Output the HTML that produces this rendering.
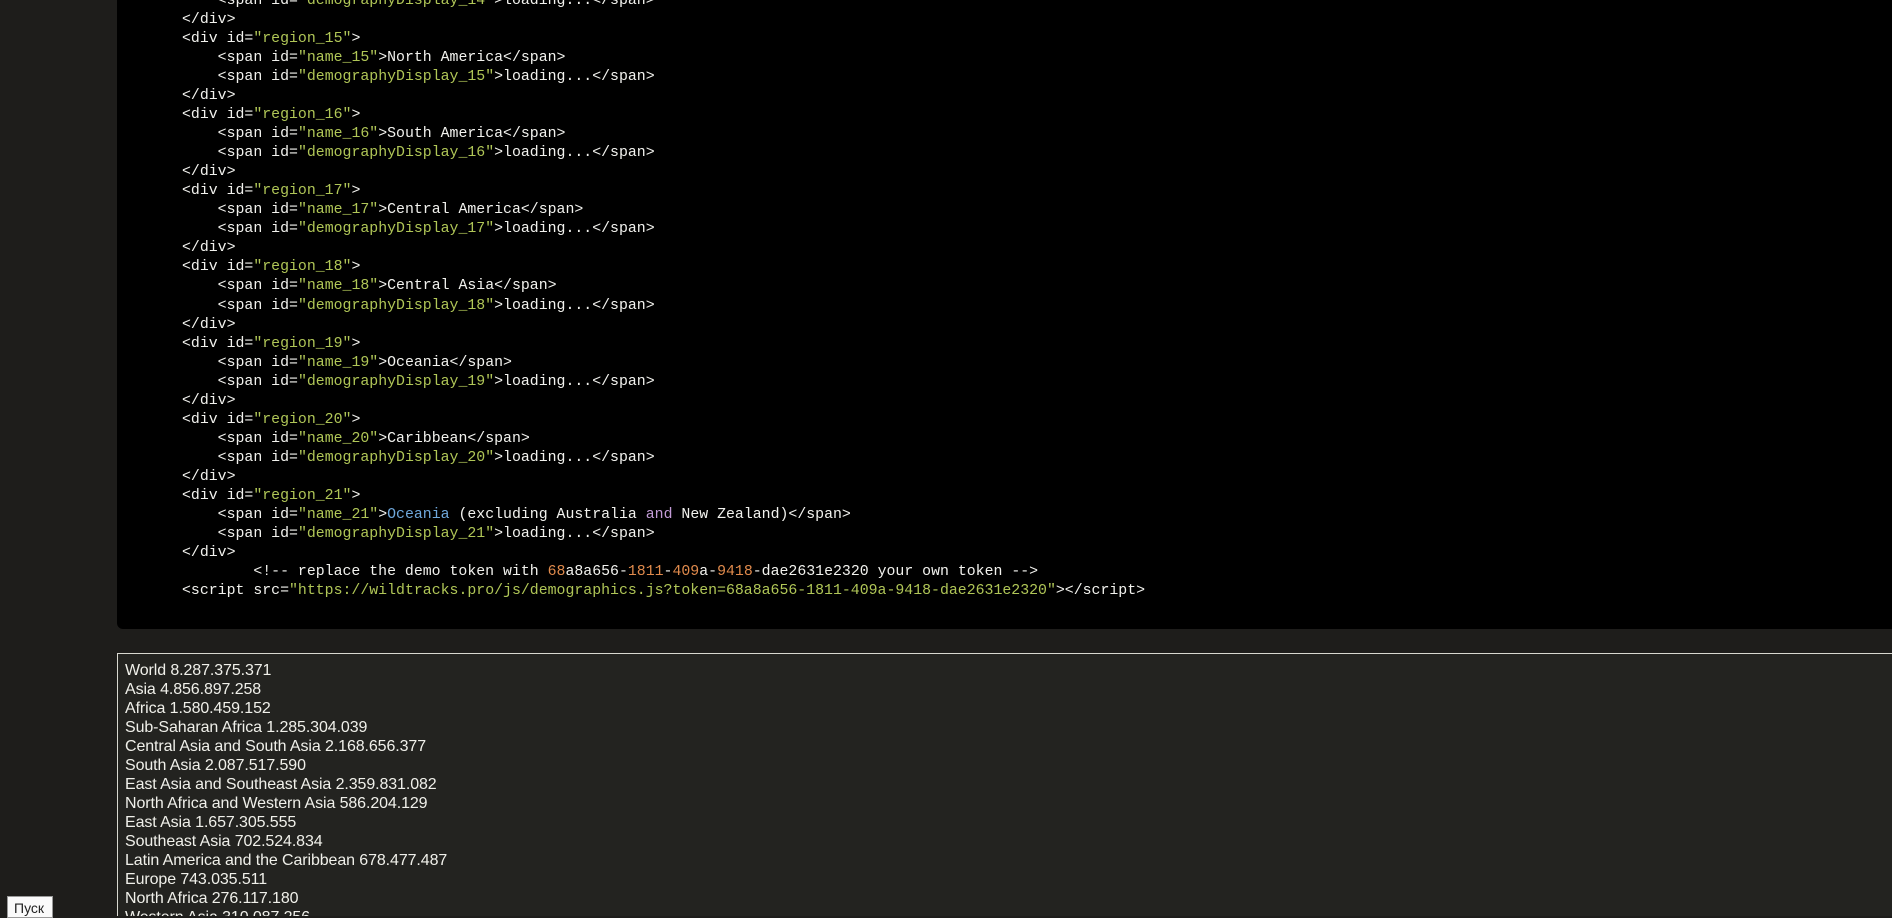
<!DOCTYPE html>
<html><head><meta charset="utf-8"><style>
html,body{margin:0;padding:0;width:1892px;height:916px;overflow:hidden;background:#1e1d1b;}
.code{position:absolute;left:117px;top:-20px;width:1775px;height:649px;background:#000;border-radius:0 0 0 6px;}
pre{position:absolute;left:182px;top:-8px;margin:0;font-family:"Liberation Mono",monospace;font-size:14.87px;line-height:19.03px;color:#f2f2ee;}
.s{color:#b0c657}.b{color:#6fa8dc}.p{color:#c29bd6}.n{color:#e08a4c}
.out{position:absolute;left:117px;top:653px;width:1775px;height:263px;overflow:hidden;background:#232320;border:1px solid #d8d8d0;border-right:none;border-bottom:none;box-sizing:border-box;}
.out div{position:absolute;left:7px;top:7px;font-family:"Liberation Sans",sans-serif;font-size:16px;line-height:19px;color:#f0f0ea;letter-spacing:-0.1px;}
.btn{position:absolute;left:7px;top:896px;width:46px;height:22px;background:#fafafa;border:1px solid #999;box-sizing:border-box;font-family:"Liberation Sans",sans-serif;font-size:14px;color:#222;padding:3px 0 0 6px;}
</style></head><body>
<div class="code"></div>
<pre>    &lt;span id=<span class="s">"demographyDisplay_14"</span>&gt;loading...&lt;/span&gt;
&lt;/div&gt;
&lt;div id=<span class="s">"region_15"</span>&gt;
    &lt;span id=<span class="s">"name_15"</span>&gt;North America&lt;/span&gt;
    &lt;span id=<span class="s">"demographyDisplay_15"</span>&gt;loading...&lt;/span&gt;
&lt;/div&gt;
&lt;div id=<span class="s">"region_16"</span>&gt;
    &lt;span id=<span class="s">"name_16"</span>&gt;South America&lt;/span&gt;
    &lt;span id=<span class="s">"demographyDisplay_16"</span>&gt;loading...&lt;/span&gt;
&lt;/div&gt;
&lt;div id=<span class="s">"region_17"</span>&gt;
    &lt;span id=<span class="s">"name_17"</span>&gt;Central America&lt;/span&gt;
    &lt;span id=<span class="s">"demographyDisplay_17"</span>&gt;loading...&lt;/span&gt;
&lt;/div&gt;
&lt;div id=<span class="s">"region_18"</span>&gt;
    &lt;span id=<span class="s">"name_18"</span>&gt;Central Asia&lt;/span&gt;
    &lt;span id=<span class="s">"demographyDisplay_18"</span>&gt;loading...&lt;/span&gt;
&lt;/div&gt;
&lt;div id=<span class="s">"region_19"</span>&gt;
    &lt;span id=<span class="s">"name_19"</span>&gt;Oceania&lt;/span&gt;
    &lt;span id=<span class="s">"demographyDisplay_19"</span>&gt;loading...&lt;/span&gt;
&lt;/div&gt;
&lt;div id=<span class="s">"region_20"</span>&gt;
    &lt;span id=<span class="s">"name_20"</span>&gt;Caribbean&lt;/span&gt;
    &lt;span id=<span class="s">"demographyDisplay_20"</span>&gt;loading...&lt;/span&gt;
&lt;/div&gt;
&lt;div id=<span class="s">"region_21"</span>&gt;
    &lt;span id=<span class="s">"name_21"</span>&gt;<span class="b">Oceania</span> (excluding Australia <span class="p">and</span> New Zealand)&lt;/span&gt;
    &lt;span id=<span class="s">"demographyDisplay_21"</span>&gt;loading...&lt;/span&gt;
&lt;/div&gt;
        &lt;!-- replace the demo token with <span class="n">68</span>a8a656-<span class="n">1811</span>-<span class="n">409</span>a-<span class="n">9418</span>-dae2631e2320 your own token --&gt;
&lt;script src=<span class="s">"https://wildtracks.pro/js/demographics.js?token=68a8a656-1811-409a-9418-dae2631e2320"</span>&gt;&lt;/script&gt;</pre>
<div class="out"><div>World 8.287.375.371<br>Asia 4.856.897.258<br>Africa 1.580.459.152<br>Sub-Saharan Africa 1.285.304.039<br>Central Asia and South Asia 2.168.656.377<br>South Asia 2.087.517.590<br>East Asia and Southeast Asia 2.359.831.082<br>North Africa and Western Asia 586.204.129<br>East Asia 1.657.305.555<br>Southeast Asia 702.524.834<br>Latin America and the Caribbean 678.477.487<br>Europe 743.035.511<br>North Africa 276.117.180<br>Western Asia 310.087.256</div></div>
<div class="btn">Пуск</div>
</body></html>
